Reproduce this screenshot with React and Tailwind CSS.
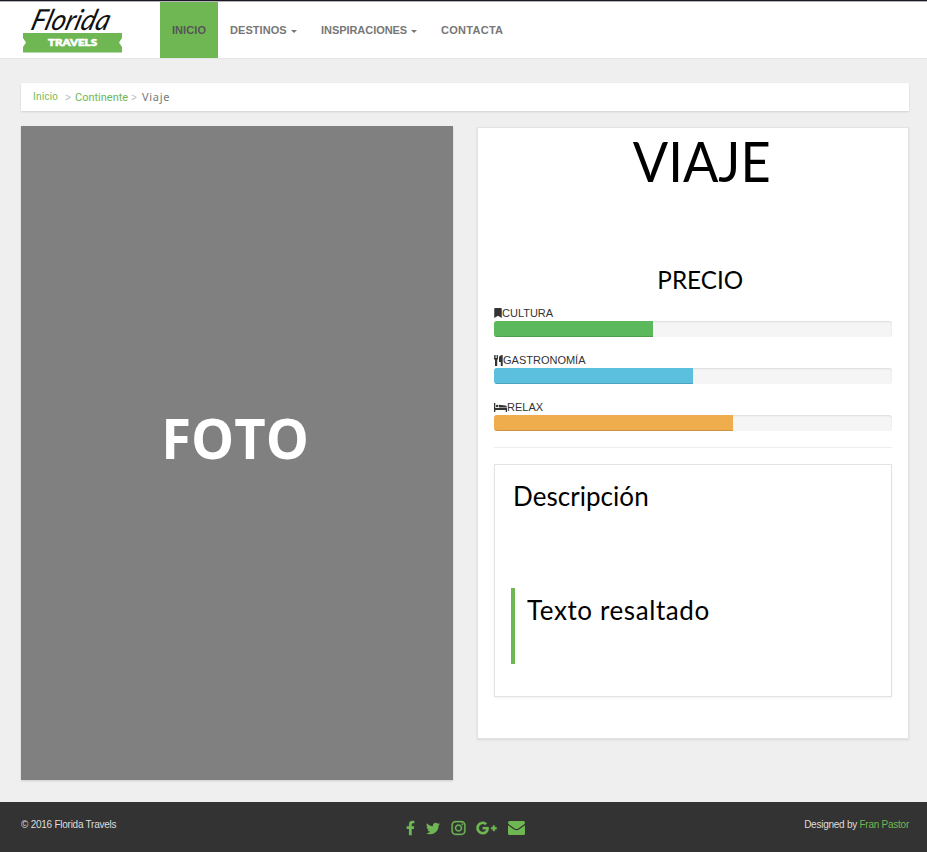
import { FaFacebookF, FaTwitter, FaInstagram, FaGooglePlusG, FaBookmark } from "react-icons/fa";

function Logo() {
  return (
    <svg width="102" height="50" viewBox="0 0 102 50" className="block overflow-visible">
      <path d="M1 29H100V34L97 38.500L100 43V48.500H1V43L4 38.500L1 34Z" fill="#6fb753" />
      <text x="7" y="26" fontSize="29" fontStyle="italic" fontWeight="400" fontFamily="Lato, sans-serif" textLength="78" lengthAdjust="spacingAndGlyphs" transform="translate(8 0) skewX(-16)" fill="#111">Florida</text>
      <text x="26" y="41.500" fontSize="9" fontWeight="900" fontFamily="Lato, sans-serif" textLength="49" lengthAdjust="spacingAndGlyphs" fill="#fff" stroke="#fff" strokeWidth="0.600">TRAVELS</text>
    </svg>
  );
}

function Cutlery() {
  return (
    <svg width="9" height="11" viewBox="0 0 9 11" className="block" fill="#333">
      <path d="M0 0H.8V3H1.400V0H2.300V3H2.900V0H3.900V4L3.200 5V11H1V5L0 4Z" />
      <path d="M8.700 0V11H6.800V7H5V2.500C5 1 6.500 0 8.700 0Z" />
    </svg>
  );
}

function Bed() {
  return (
    <svg width="13" height="9" viewBox="0 0 13 9" className="block" fill="#333">
      <path d="M0 0H1.300V5H13V9H11.700V7H1.300V9H0Z" />
      <circle cx="3.200" cy="3" r="1.300" />
      <path d="M5 1.700L11.500 2.400Q13 2.700 13 4.400H5Z" />
    </svg>
  );
}

function Envelope() {
  return (
    <svg width="17" height="14" viewBox="0 0 17 14" className="block" fill="currentColor">
      <path d="M1.500 0H15.500Q17 0 17 1.500Q17 2.800 15.600 3.800L10.300 7.500Q8.500 8.700 6.700 7.500L1.400 3.800Q0 2.800 0 1.500Q0 0 1.500 0Z" />
      <path d="M0 4.200L6 8.400Q8.500 10 11 8.400L17 4.200V12.400Q17 14 15.500 14H1.500Q0 14 0 12.400Z" />
    </svg>
  );
}

function Caret() {
  return <span className="ml-1 mt-[2px] border-x-[3px] border-t-[3px] border-x-transparent border-t-[#777]" />;
}

function Meter({ icon, label, width, color }) {
  return (
    <div className="mb-[15px] h-8">
      <div className="flex h-4 items-center text-[11px] leading-4 text-[#333]">
        {icon}
        <span>{label}</span>
      </div>
      <div className="h-4 overflow-hidden rounded-[3px] bg-[#f5f5f5] shadow-[inset_0_1px_2px_rgba(0,0,0,0.1)]">
        <div className={`h-full shadow-[inset_0_-1px_0_rgba(0,0,0,0.15)] ${width} ${color}`} />
      </div>
    </div>
  );
}

export default function App() {
  return (
    <div className="flex h-[852px] w-[927px] flex-col overflow-hidden bg-[#efefef] font-['Liberation_Sans',sans-serif]">
      <header className="flex h-[59px] shrink-0 border-b border-t border-b-[#e5e5e5] border-t-[#1b1825] bg-white shadow-[inset_0_1px_0_#b5b3b8]">
        <div className="ml-[22px] w-[138px] pt-[3px]"><Logo /></div>
        <nav className="mt-px flex text-[11px] font-bold text-[#777]">
          <a className="flex w-[58px] items-center justify-center bg-[#6fb753] tracking-[0.1px] text-[#555]">INICIO</a>
          <a className="flex w-[91px] items-center pl-3 tracking-[0.05px]">DESTINOS<Caret /></a>
          <a className="flex w-[120px] items-center pl-3 tracking-[-0.05px]">INSPIRACIONES<Caret /></a>
          <a className="flex items-center pl-3 tracking-[0.28px]">CONTACTA</a>
        </nav>
      </header>

      <div className="ml-[21px] mt-6 flex h-7 w-[888px] shrink-0 items-center bg-white pl-3 text-[10px] shadow-[0_1px_2px_rgba(0,0,0,0.12)]">
        <a className="w-8 pb-px tracking-[0.3px] text-[#6fb753]">Inicio</a>
        <span className="w-[10px] text-[#bbb]">&gt;</span>
        <a className="w-14 pt-[2px] font-['Roboto'] text-[11px] text-[#6fb753]">Continente</a>
        <span className="w-[11px] text-[#bbb]">&gt;</span>
        <span className="pt-px font-['Noto_Sans'] text-[11px] tracking-[0.7px] text-[#777]">Viaje</span>
      </div>

      <main className="ml-[21px] mt-[15px] flex h-[676px] w-[888px] shrink-0 items-start justify-between">
        <div className="flex h-[654px] w-[432px] items-center justify-center bg-[#808080] pb-8 pr-1 text-white shadow-[0_1px_2px_rgba(0,0,0,0.15)]">
          <span className="scale-x-[0.97] font-['Open_Sans'] text-[56px] font-bold leading-none">FOTO</span>
        </div>

        <section className="mt-px h-[612px] w-[432px] border border-[#e3e3e3] bg-white px-4 shadow-[0_1px_2px_rgba(0,0,0,0.1)]">
          <h1 className="h-[136px] pl-[18px] pt-[5px] text-center font-['Lato'] text-[56px] leading-[56px] text-black"><span className="inline-block scale-x-[0.935]">VIAJE</span></h1>
          <h2 className="h-[41px] pl-[14px] text-center font-['Lato'] text-[25px] leading-[30px] text-black"><span className="inline-block scale-x-[0.97]">PRECIO</span></h2>
          <Meter icon={<FaBookmark className="h-[10px] w-2" />} label="CULTURA" width="w-[40%]" color="bg-[#5cb85c]" />
          <Meter icon={<Cutlery />} label="GASTRONOMÍA" width="w-[50%]" color="bg-[#5bc0de]" />
          <Meter icon={<Bed />} label="RELAX" width="w-[60%]" color="bg-[#f0ad4e]" />
          <hr className="mb-4 mt-4 border-[#eee]" />
          <div className="h-[233px] border border-[#e3e3e3] px-4 pt-4 shadow-[0_1px_2px_rgba(0,0,0,0.06)]">
            <p className="h-[107px] pl-[2px] font-['Lato'] text-[26px] leading-[30px] tracking-[0.05px] text-black">Descripción</p>
            <blockquote className="h-[76px] border-l-4 border-[#6fb753] pl-3 pt-[7px] font-['Lato'] text-[26px] leading-[30px] tracking-[0.6px] text-black">Texto resaltado</blockquote>
          </div>
        </section>
      </main>

      <footer className="grid h-[50px] shrink-0 grid-cols-3 bg-[#333] px-[21px] text-[10px] leading-[46px] text-[#ddd]">
        <div className="tracking-[-0.25px]">© 2016 Florida Travels</div>
        <div className="flex items-center justify-center pl-[3px] pt-[2px] text-[#6fb753]">
          <FaFacebookF className="mr-[11px] h-4 w-[9px]" />
          <FaTwitter className="mr-[11px] h-[15px] w-[14px]" />
          <FaInstagram className="mr-[10px] h-4 w-[15px] stroke-current stroke-[10]" />
          <FaGooglePlusG className="mr-[11px] h-[22px] w-[21px] stroke-current stroke-[10]" />
          <Envelope />
        </div>
        <div className="-mr-[3px] text-right tracking-[-0.25px]">Designed by <a className="text-[#6fb753]">Fran Pastor</a></div>
      </footer>
    </div>
  );
}
